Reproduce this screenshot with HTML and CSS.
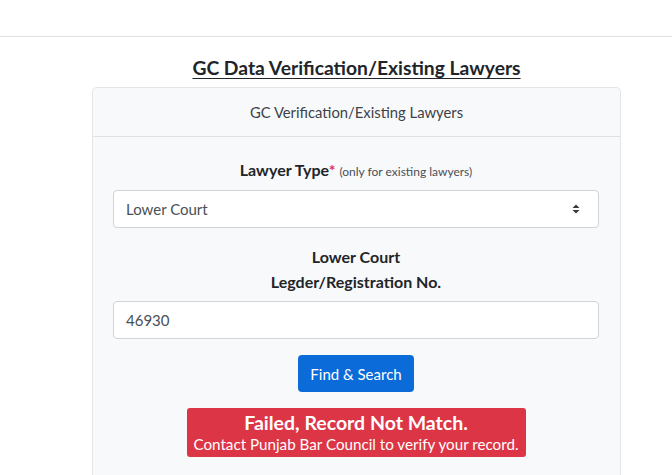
FILE: index.html
```html
<!DOCTYPE html>
<html>
<head>
<meta charset="utf-8">
<link rel="stylesheet" href="styles.css">
</head>
<body>
<header class="topbar"></header>
<main class="page">
  <h1 class="title">GC Data Verification/Existing Lawyers</h1>
  <section class="card">
    <div class="card-header">GC Verification/Existing Lawyers</div>
    <div class="card-body">
      <div class="field first">
        <label class="label">Lawyer Type<span class="req">*</span> <small class="hint">(only for existing lawyers)</small></label>
        <div class="select">
          <span>Lower Court</span>
          <svg class="caret" width="10" height="12" viewBox="0 0 10 12"><path d="M1.5 5 L5 1.5 L8.5 5 Z M1.5 7 L5 10.5 L8.5 7 Z" fill="#343a40"/></svg>
        </div>
      </div>
      <div class="field">
        <label class="label">Lower Court<br>Legder/Registration No.</label>
        <div class="input">46930</div>
      </div>
      <div class="actions">
        <button class="btn">Find &amp; Search</button>
      </div>
      <div class="alert">
        <strong class="alert-title">Failed, Record Not Match.</strong>
        <span class="alert-text">Contact Punjab Bar Council to verify your record.</span>
      </div>
    </div>
  </section>
</main>
</body>
</html>
```
FILE: styles.css
```css
* { box-sizing: border-box; }
html, body { margin: 0; padding: 0; background: #fff; }
body {
  font-family: "Source Sans Pro", Lato, "Liberation Sans", sans-serif;
  color: #212529;
  font-size: 15px;
  overflow: hidden;
  height: 475px;
}
.topbar {
  height: 37px;
  border-bottom: 1px solid #dee2e6;
}
.page {
  padding-left: 92px;
  width: 621px;
}
.title {
  margin: 19px 0 7px;
  text-align: center;
  font-size: 19.3px;
  font-weight: 700;
  text-decoration: underline;
  text-underline-offset: 3px;
  color: #212529;
  line-height: 24px;
}
.card {
  width: 529px;
  background: #f8f9fa;
  border: 1px solid rgba(0,0,0,.08);
  border-radius: 5px;
}
.card-header {
  height: 49px;
  display: flex;
  align-items: center;
  justify-content: center;
  border-bottom: 1px solid #dee2e6;
  color: #3c4248;
  font-size: 14.8px;
}
.card-body {
  padding: 20px 21px 30px 20px;
  display: flex;
  flex-direction: column;
  gap: 16px;
}
.field { display: flex; flex-direction: column; gap: 7px; }
.field.first { gap: 6px; }
.label {
  text-align: center;
  font-weight: 700;
  font-size: 16px;
  line-height: 25px;
  color: #212529;
}
.req { color: #dc3545; }
.hint { font-weight: 400; font-size: 12px; color: #495057; }
.select, .input {
  height: 38px;
  background: #fff;
  border: 1px solid #ced4da;
  border-radius: 4px;
  padding: 0 12px;
  display: flex;
  align-items: center;
  color: #495057;
  font-size: 15px;
}
.select { justify-content: space-between; }
.caret { margin-right: 5px; }
.actions { display: flex; justify-content: center; }
.btn {
  font-family: inherit;
  font-size: 15px;
  color: #fff;
  background: #0b6bd9;
  border: none;
  border-radius: 4px;
  height: 37px;
  width: 116px;
  padding: 0;
}
.alert {
  align-self: center;
  width: 339px;
  height: 49px;
  background: #dc3545;
  color: #fff;
  border-radius: 3px;
  display: flex;
  flex-direction: column;
  align-items: center;
  justify-content: center;
  white-space: nowrap;
}
.alert-title { font-size: 19.5px; line-height: 22px; }
.alert-text { font-size: 15.2px; line-height: 20px; }
```
